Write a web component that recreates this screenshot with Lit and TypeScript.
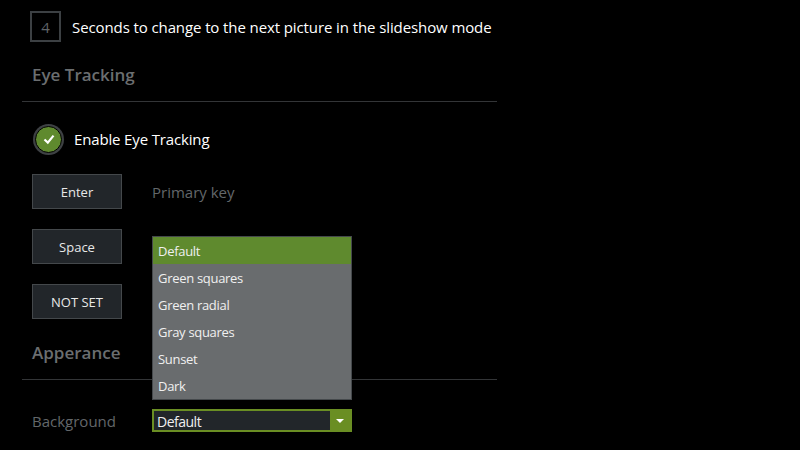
import { css, html, LitElement } from "lit";
import { customElement } from "lit/decorators.js";

const OPTIONS = ["Default", "Green squares", "Green radial", "Gray squares", "Sunset", "Dark"];
const KEYS = ["Enter", "Space", "NOT SET"];

@customElement("app-root")
export class AppRoot extends LitElement {
  render() {
    return html`<div class="page">
      <div class="seconds">
        <div class="number">4</div>
        <span>Seconds to change to the next picture in the slideshow mode</span>
      </div>
      <h2 class="eye">Eye Tracking</h2>
      <label class="enable">
        <span class="check">
          <svg width="14" height="14" viewBox="0 0 14 14">
            <path d="M2.5 7.5 L5.8 10.6 L11.5 3.6" fill="none" stroke="#fff" stroke-width="2.2" />
          </svg>
        </span>
        Enable Eye Tracking
      </label>
      <div class="keys">
        ${KEYS.map(
          (k, i) => html`<div class="key-row">
            <div class="key">${k}</div>
            ${i === 0 ? html`<span class="muted">Primary key</span>` : ""}
          </div>`
        )}
      </div>
      <h2 class="appearance">Apperance</h2>
      <div class="bg-row">
        <span class="muted bg-label">Background</span>
        <div class="select-wrap">
          <div class="select">
            <div class="value">Default</div>
            <div class="arrow"></div>
          </div>
          <div class="popup">
            ${OPTIONS.map(
              (o, i) => html`<div class="option ${i === 0 ? "active" : ""}">${o}</div>`
            )}
          </div>
        </div>
      </div>
    </div>`;
  }

  static styles = css`
    :host {
      display: block;
      height: 450px;
      overflow: hidden;
      background: #000;
      color: #fff;
      font-family: "Open Sans", "Noto Sans", sans-serif;
    }
    .page {
      box-sizing: border-box;
      width: 475px;
      height: 450px;
      margin-left: 22px;
      padding-top: 11px;
    }
    .seconds {
      display: flex;
      align-items: center;
      gap: 11px;
      margin-left: 8px;
      font-size: 15px;
      letter-spacing: -0.1px;
      height: 31px;
      white-space: nowrap;
    }
    .number {
      box-sizing: border-box;
      width: 31px;
      height: 31px;
      border: 2px solid #3c4043;
      color: #5f6366;
      display: flex;
      align-items: center;
      justify-content: center;
      font-size: 15px;
    }
    h2 {
      margin: 0;
      font-size: 17px;
      font-weight: 600;
      color: #6b6e70;
      padding-left: 10px;
      border-bottom: 1px solid #333537;
      box-sizing: border-box;
      line-height: 24px;
    }
    .eye {
      margin-top: 21px;
      height: 39px;
    }
    .enable {
      display: flex;
      align-items: center;
      gap: 12px;
      margin: 21px 0 0 13px;
      height: 32px;
      font-size: 15px;
      letter-spacing: -0.15px;
    }
    .check {
      box-sizing: border-box;
      width: 27px;
      height: 27px;
      border-radius: 50%;
      background: #5f8a2e;
      border: 1px solid #000;
      box-shadow: 0 0 0 2px #3e4144;
      display: flex;
      align-items: center;
      justify-content: center;
    }
    .keys {
      margin: 19px 0 0 10px;
      display: flex;
      flex-direction: column;
      gap: 20px;
    }
    .key-row {
      display: flex;
      align-items: center;
      gap: 30px;
    }
    .key {
      box-sizing: border-box;
      width: 90px;
      height: 35px;
      background: #22262a;
      border: 1px solid #44484b;
      color: #e8e8e8;
      font-size: 13px;
      display: flex;
      align-items: center;
      justify-content: center;
    }
    .muted {
      color: #63676a;
      font-size: 15px;
    }
    .appearance {
      margin-top: 22px;
      height: 39px;
    }
    .bg-row {
      display: flex;
      align-items: flex-start;
      margin: 29px 0 0 10px;
    }
    .bg-label {
      width: 120px;
      line-height: 24px;
    }
    .select-wrap {
      position: relative;
      width: 200px;
    }
    .select {
      box-sizing: border-box;
      height: 23px;
      display: flex;
      border: 2px solid #6a8e23;
      background: #6a8e23;
    }
    .value {
      flex: 1;
      background: #22262a;
      color: #f0f0f0;
      font-size: 14px;
      letter-spacing: -0.5px;
      line-height: 21px;
      padding-left: 3px;
    }
    .arrow {
      width: 20px;
      position: relative;
    }
    .arrow::after {
      content: "";
      position: absolute;
      left: 6px;
      top: 8px;
      border: 4px solid transparent;
      border-top: 4px solid #fff;
      border-bottom: 0;
    }
    .popup {
      position: absolute;
      left: 0;
      bottom: 32px;
      box-sizing: border-box;
      width: 200px;
      height: 164px;
      background: #696c6e;
      border: 1px solid #45494c;
    }
    .option {
      height: 27px;
      line-height: 29px;
      padding-left: 5px;
      font-size: 13px;
      letter-spacing: -0.3px;
      color: #f0f0f0;
    }
    .option.active {
      background: #5f8a2e;
    }
  `;
}
